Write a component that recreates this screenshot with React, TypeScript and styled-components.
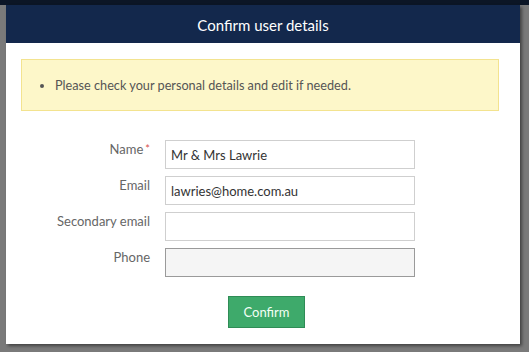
import React from "react";
import styled, { createGlobalStyle } from "styled-components";

const GlobalStyle = createGlobalStyle`
    html, body {
        margin: 0;
        padding: 0;
    }
    body {
        width: 529px;
        height: 352px;
        overflow: hidden;
        background: linear-gradient(#0c1626 0, #0c1626 5px, #7a7a7a 5px);
        font-family: Lato, "Open Sans", sans-serif;
    }
`;

const Backdrop = styled.div`
    padding: 5px 0 0 6px;
`;

const Modal = styled.div`
    width: 514px;
    height: 339px;
    background: #fff;
    box-shadow: 2px 2px 3px rgba(0, 0, 0, 0.45);
    display: flex;
    flex-direction: column;
`;

const Header = styled.div`
    height: 39px;
    background: #13284c;
    color: #fff;
    font-size: 15px;
    display: flex;
    align-items: center;
    justify-content: center;
    padding-top: 1px;
    box-sizing: border-box;
`;

const Body = styled.div`
    padding: 16px 21px 16px 15px;
`;

const Alert = styled.ul`
    margin: 0;
    height: 52px;
    box-sizing: border-box;
    background: #fdf7c9;
    border: 1px solid #f3e38f;
    padding: 0 0 0 33px;
    display: flex;
    align-items: center;
    color: #555;
    font-size: 12.7px;
`;

const AlertItem = styled.li`
    padding-left: 0;
`;

const Form = styled.form`
    margin-top: 29px;
    display: grid;
    grid-template-columns: 129px 250px;
    column-gap: 15px;
    row-gap: 7px;
`;

const Label = styled.label`
    text-align: right;
    color: #666;
    font-size: 13px;
    line-height: 18px;
`;

const Required = styled.span`
    color: #d9534f;
    font-size: 11px;
    vertical-align: top;
    margin-left: 2px;
`;

const Input = styled.input<{ disabledLook?: boolean }>`
    height: 29px;
    box-sizing: border-box;
    border: 1px solid ${(p) => (p.disabledLook ? "#9a9a9a" : "#cfcfcf")};
    background: ${(p) => (p.disabledLook ? "#f5f5f5" : "#fff")};
    padding: 0 5px;
    font-family: Lato, "Open Sans", sans-serif;
    font-size: 13px;
    color: #333;
    outline: none;
    margin: 0;
`;

const Actions = styled.div`
    margin-top: 19px;
    padding-left: 207px;
    display: flex;
`;

const Button = styled.button`
    width: 77px;
    height: 32px;
    background: #3eaa6b;
    border: 1px solid #2f8c56;
    color: #f4fff6;
    font-family: Lato, "Open Sans", sans-serif;
    font-size: 13px;
    cursor: pointer;
    padding: 0;
`;

const fields = [
    { label: "Name", value: "Mr & Mrs Lawrie", required: true },
    { label: "Email", value: "lawries@home.com.au" },
    { label: "Secondary email", value: "" },
    { label: "Phone", value: "", disabled: true },
];

export default function App() {
    return (
        <>
            <GlobalStyle />
            <Backdrop>
                <Modal>
                    <Header>Confirm user details</Header>
                    <Body>
                        <Alert>
                            <AlertItem>
                                Please check your personal details and edit if needed.
                            </AlertItem>
                        </Alert>
                        <Form onSubmit={(e) => e.preventDefault()}>
                            {fields.map((f) => (
                                <React.Fragment key={f.label}>
                                    <Label>
                                        {f.label}
                                        {f.required && <Required>*</Required>}
                                    </Label>
                                    <Input
                                        defaultValue={f.value}
                                        disabledLook={f.disabled}
                                        readOnly={f.disabled}
                                    />
                                </React.Fragment>
                            ))}
                        </Form>
                        <Actions>
                            <Button type="button">Confirm</Button>
                        </Actions>
                    </Body>
                </Modal>
            </Backdrop>
        </>
    );
}
